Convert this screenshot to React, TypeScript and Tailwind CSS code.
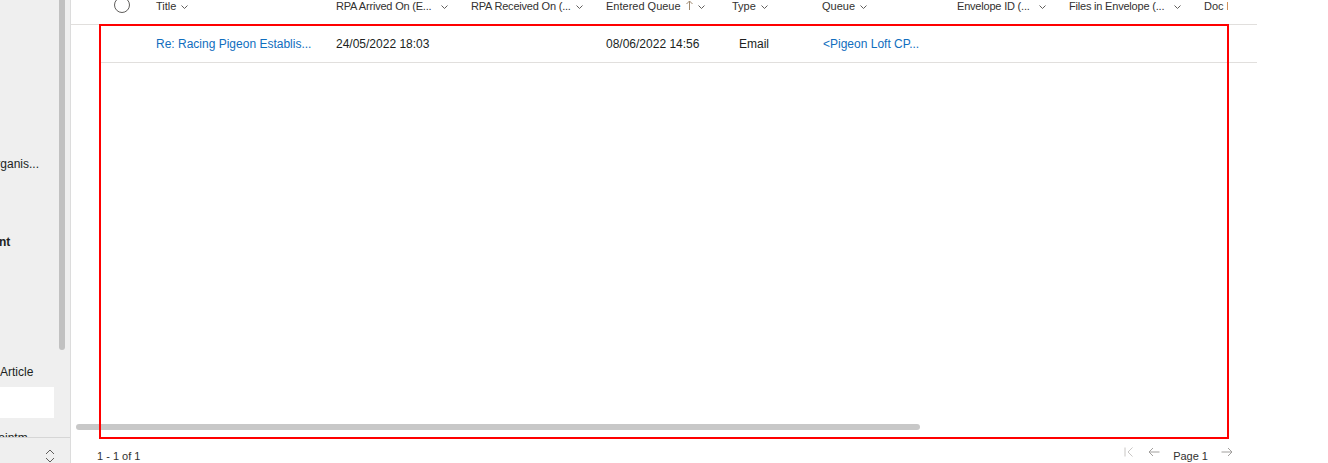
import React from "react";

const Chevron = () => (
  <svg width="7" height="4" viewBox="0 0 7 4" className="shrink-0">
    <path d="M0.5 0.5l3 3 3-3" fill="none" stroke="#605e5c" strokeWidth="1" />
  </svg>
);

interface ColProps {
  label: string;
  width: string;
  truncated?: boolean;
  sorted?: boolean;
}

function HeaderCell({ label, width, truncated, sorted }: ColProps) {
  if (truncated) {
    return (
      <div className={`${width} shrink-0 pl-[6px] pr-[17px] pt-[1px] flex items-start justify-between`}>
        <span className="leading-[11px] whitespace-nowrap tracking-[-0.2px]">{label}</span>
        <span className="pt-[4px] pl-[4px]"><Chevron /></span>
      </div>
    );
  }
  return (
    <div className={`${width} shrink-0 pl-[6px] pt-[1px] flex items-start`}>
      <span className="leading-[11px] whitespace-nowrap">{label}</span>
      {sorted && (
        <svg width="7" height="10" viewBox="0 0 7 10" className="ml-[5px] -mt-[1px] shrink-0">
          <path d="M3.5 10V1M0.5 4l3-3 3 3" fill="none" stroke="#a08a70" strokeWidth="1" />
        </svg>
      )}
      <span className="ml-[5px] pt-[4px]"><Chevron /></span>
    </div>
  );
}

export default function App() {
  return (
    <div className="relative w-[1328px] h-[463px] overflow-hidden bg-white flex font-['Liberation_Sans',Arial,sans-serif] text-[#323130]">
      {/* left navigation, scrolled */}
      <div className="w-[71px] h-full shrink-0 bg-[#efefef] border-r border-[#dcdcdc] flex flex-col">
        <div className="h-[437px] flex">
          <div className="w-[59px] overflow-hidden text-[12px] leading-[16px] text-[#201f1e]">
            <div className="pt-[156px]">
              <div className="h-[16px] whitespace-nowrap -ml-[13px]">Organis...</div>
              <div className="mt-[62px] h-[16px] whitespace-nowrap font-bold -ml-[63px]">Management</div>
              <div className="mt-[114px] h-[16px] whitespace-nowrap">Article</div>
              <div className="mt-[7px] h-[31px] w-[54px] bg-white" />
              <div className="mt-[12px] h-[16px] whitespace-nowrap -ml-[23px]">Appointm...</div>
            </div>
          </div>
          <div className="w-[6px]">
            <div className="h-[350px] bg-[#c1c1c1] rounded-b-[3px]" />
          </div>
        </div>
        <div className="flex-1 border-t border-[#d6d6d6] flex justify-end pr-[15px] pt-[11px]">
          <svg width="10" height="14" viewBox="0 0 10 14">
            <path d="M1 5l4-4 4 4M1 9l4 4 4-4" fill="none" stroke="#605e5c" strokeWidth="1" />
          </svg>
        </div>
      </div>

      {/* grid */}
      <div className="flex-1 flex flex-col">
        <div className="h-[437px] flex flex-col">
          <div className="w-[1186px] h-[25px] border-b border-[#e1dfdd] flex text-[11px]">
            <div className="w-[29px] shrink-0" />
            <div className="w-[50px] shrink-0 pl-[14px]">
              <div className="-mt-[3px] w-[16px] h-[16px] rounded-full border border-[#605e5c]" />
            </div>
            <HeaderCell label="Title" width="w-[180px]" />
            <HeaderCell label="RPA Arrived On (E..." width="w-[135px]" truncated />
            <HeaderCell label="RPA Received On (..." width="w-[135px]" truncated />
            <HeaderCell label="Entered Queue" width="w-[126px]" sorted />
            <HeaderCell label="Type" width="w-[90px]" />
            <HeaderCell label="Queue" width="w-[135px]" />
            <HeaderCell label="Envelope ID (..." width="w-[112px]" truncated />
            <HeaderCell label="Files in Envelope (..." width="w-[135px]" truncated />
            <div className="w-[59px] shrink-0 pl-[6px] pt-[1px]">
              <div className="w-[24px] overflow-hidden whitespace-nowrap leading-[11px]">Doc ID</div>
            </div>
          </div>

          <div className="ml-[29px] w-[1157px] h-[38px] border-b border-[#e1dfdd] flex items-center text-[12px] leading-[16px] text-[#201f1e]">
            <div className="w-[50px] shrink-0" />
            <div className="w-[180px] shrink-0 pl-[6px] text-[#106ebe] whitespace-nowrap">Re: Racing Pigeon Establis...</div>
            <div className="w-[135px] shrink-0 pl-[6px]">24/05/2022 18:03</div>
            <div className="w-[135px] shrink-0" />
            <div className="w-[126px] shrink-0 pl-[6px]">08/06/2022 14:56</div>
            <div className="w-[90px] shrink-0 pl-[13px]">Email</div>
            <div className="w-[135px] shrink-0 pl-[7px] text-[#106ebe] whitespace-nowrap">&lt;Pigeon Loft CP...</div>
          </div>

          <div className="flex-1" />
          <div className="ml-[5px] w-[844px] h-[6px] rounded-full bg-[#c8c8c8] mb-[4px]" />
        </div>

        <div className="flex-1 flex items-start justify-between text-[11px] leading-[14px]">
          <div className="pl-[26px] pt-[15px]">1 - 1 of 1</div>
          <div className="flex items-start pt-[12px] pr-[95px]">
            <svg width="10" height="10" viewBox="0 0 10 10" className="mt-[1px]">
              <path d="M1 0.5v9M8.5 0.5L4 5l4.5 4.5" fill="none" stroke="#c8c6c4" strokeWidth="1" />
            </svg>
            <svg width="12" height="10" viewBox="0 0 12 10" className="ml-[14px] mt-[1px]">
              <path d="M11.5 5H1M5 1L1 5l4 4" fill="none" stroke="#a19f9d" strokeWidth="1" />
            </svg>
            <span className="ml-[13px] pt-[3px]">Page 1</span>
            <svg width="12" height="10" viewBox="0 0 12 10" className="ml-[13px] mt-[1px]">
              <path d="M0.5 5H11M7 1l4 4-4 4" fill="none" stroke="#a19f9d" strokeWidth="1" />
            </svg>
          </div>
        </div>
      </div>

      {/* highlight annotation */}
      <div className="absolute left-[99px] top-[24px] w-[1130px] h-[415px] border-2 border-[#ff0000] pointer-events-none" />
    </div>
  );
}
